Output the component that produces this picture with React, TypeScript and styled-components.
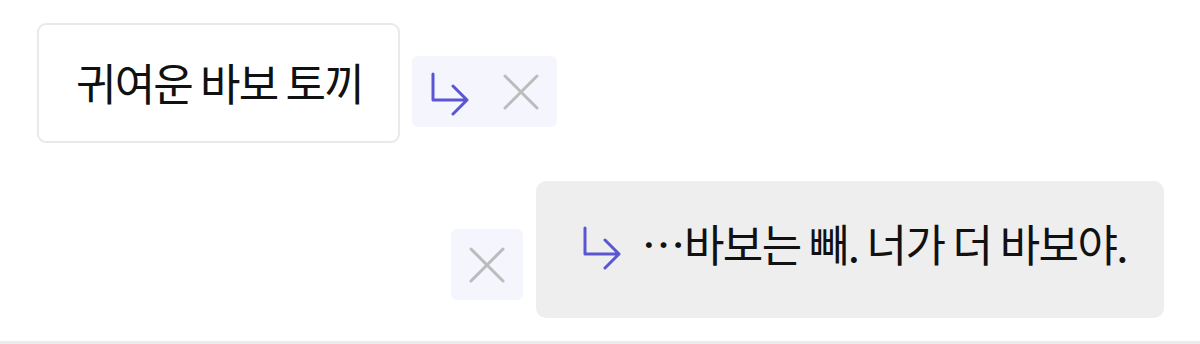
import styled, { createGlobalStyle } from "styled-components";

const Global = createGlobalStyle`
  html, body {
    margin: 0;
    padding: 0;
    background: #ffffff;
  }
  body {
    font-family: "Noto Sans CJK KR", "Noto Sans", sans-serif;
    color: #111111;
  }
`;

const Page = styled.div`
  box-sizing: border-box;
  width: 1200px;
  height: 344px;
  border-bottom: 3px solid #ececec;
  padding: 23px 36px 0 37px;
  display: flex;
  flex-direction: column;
  gap: 38px;
`;

const Row = styled.div<{ $end?: boolean }>`
  display: flex;
  align-items: flex-start;
  justify-content: ${(p) => (p.$end ? "flex-end" : "flex-start")};
  gap: ${(p) => (p.$end ? "13px" : "12px")};
`;

const Card = styled.div`
  box-sizing: border-box;
  width: 363px;
  height: 120px;
  border: 2px solid #e9e9e9;
  border-radius: 9px;
  background: #ffffff;
  display: flex;
  align-items: center;
  padding: 0 0 2px 37px;
  font-size: 44px;
  line-height: 1;
  letter-spacing: -1.8px;
`;

const Actions = styled.div<{ $top: number }>`
  margin-top: ${(p) => p.$top}px;
  height: 71px;
  padding: 0 18px;
  display: flex;
  align-items: center;
  gap: 33px;
  background: #f5f5fd;
  border-radius: 6px;
`;

const Bubble = styled.div`
  box-sizing: border-box;
  height: 137px;
  background: #eeeeee;
  border-radius: 10px;
  padding: 0 37px 14px 46px;
  display: flex;
  align-items: center;
  gap: 20px;
  font-size: 44px;
  line-height: 1;
  letter-spacing: -1.6px;
`;

const Icon = styled.svg<{ $shift?: number }>`
  flex: none;
  display: block;
  margin-top: ${(p) => p.$shift ?? 0}px;
`;

function ReplyArrow({ shift = 0 }: { shift?: number }) {
  return (
    <Icon $shift={shift} width="40" height="44" viewBox="0 0 40 44" fill="none">
      <path
        d="M3 2 V28 H37 M23 14 L37 28 L23 42"
        stroke="#5a56d2"
        strokeWidth="3"
        strokeLinecap="round"
        strokeLinejoin="round"
      />
    </Icon>
  );
}

function Cross() {
  return (
    <Icon width="36" height="36" viewBox="0 0 36 36" fill="none">
      <path
        d="M2 2 L34 34 M34 2 L2 34"
        stroke="#bcbcbc"
        strokeWidth="3"
        strokeLinecap="round"
      />
    </Icon>
  );
}

export default function App() {
  return (
    <>
      <Global />
      <Page>
        <Row>
          <Card>귀여운 바보 토끼</Card>
          <Actions $top={33}>
            <ReplyArrow shift={4} />
            <Cross />
          </Actions>
        </Row>
        <Row $end>
          <Actions $top={48}>
            <Cross />
          </Actions>
          <Bubble>
            <ReplyArrow shift={10} />
            <span>…바보는 빼. 너가 더 바보야.</span>
          </Bubble>
        </Row>
      </Page>
    </>
  );
}
